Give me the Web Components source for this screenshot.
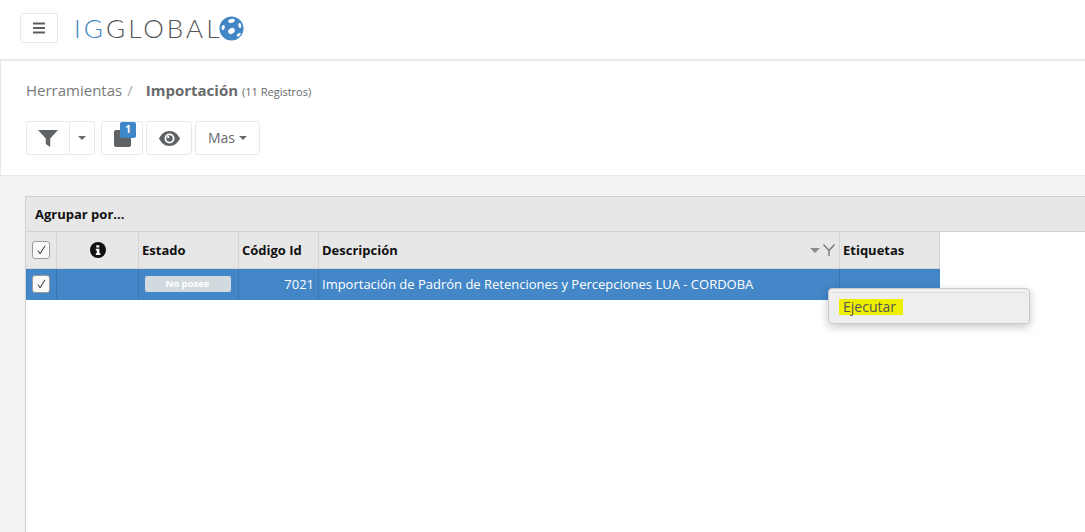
<!DOCTYPE html>
<html lang="es">
<head>
<meta charset="utf-8">
<title>Importación</title>
<style>
  html, body { margin: 0; height: 100%; overflow: hidden; background: #f3f3f4; }
  body { font-family: "Open Sans", sans-serif; color: #676a6c; }
</style>
</head>
<body>
<ig-topbar></ig-topbar>
<ig-heading></ig-heading>
<ig-panel></ig-panel>

<script>
class IGTopbar extends HTMLElement {
  constructor() {
    super();
    this.attachShadow({ mode: 'open' });
    this.shadowRoot.innerHTML = `
      <style>
        :host { display: flex; align-items: flex-start; height: 59px; background: #fff; border-bottom: 2px solid #e7eaec; }
        button { margin: 13px 0 0 20px; width: 38px; height: 30px; box-sizing: border-box; padding: 0; background: #fff;
                 border: 1px solid #e7eaec; border-radius: 3px; display: flex; align-items: center; justify-content: center; }
        .logo { display: flex; align-items: center; margin: 13px 0 0 16px; height: 30px; font: 300 26px/30px Lato, sans-serif;
                letter-spacing: 3.05px; color: #555; white-space: nowrap; }
        .logo span { color: #4386c6; }
        svg { display: block; }
        .ball { margin-left: -3px; }
      </style>
      <button aria-label="Menu">
        <svg width="12" height="12" viewBox="0 0 12 12"><path d="M0 1.500h12M0 6h12M0 10.500h12" stroke="#5b5e60" stroke-width="2"/></svg>
      </button>
      <div class="logo"><span>IG</span>GLOBAL
        <svg class="ball" width="25" height="25" viewBox="0 0 25 25">
          <circle cx="12.500" cy="12.500" r="12" fill="#4386c6"/>
          <ellipse cx="12.500" cy="4.800" rx="3.300" ry="1.900" fill="#fff" transform="rotate(-15 12.500 4.800)"/>
          <ellipse cx="4.200" cy="11.500" rx="1.500" ry="2.600" fill="#fff" transform="rotate(15 4.200 11.500)"/>
          <ellipse cx="12.500" cy="15" rx="3.500" ry="2.700" fill="#fff" transform="rotate(-35 12.500 15)"/>
          <ellipse cx="20.800" cy="9.500" rx="1.400" ry="2.600" fill="#fff" transform="rotate(-10 20.800 9.500)"/>
          <ellipse cx="19.800" cy="18.800" rx="2.300" ry="1.300" fill="#fff" transform="rotate(-40 19.800 18.800)"/>
        </svg>
      </div>`;
  }
}
customElements.define('ig-topbar', IGTopbar);

class IGToolButton extends HTMLElement {
  constructor() {
    super();
    this.attachShadow({ mode: 'open' });
    this.shadowRoot.innerHTML = `
      <style>
        :host { display: flex; align-items: center; justify-content: center; position: relative; box-sizing: border-box; height: 34px;
                background: #fff; border: 1px solid #e7eaec; border-radius: 3px; color: #676a6c; font-size: 14px; line-height: 30px; }
      </style>
      <slot></slot>`;
  }
}
customElements.define('ig-tool-button', IGToolButton);

class IGHeading extends HTMLElement {
  constructor() {
    super();
    this.attachShadow({ mode: 'open' });
    this.shadowRoot.innerHTML = `
      <style>
        :host { display: block; box-sizing: border-box; height: 115px; background: #fff; border-left: 1px solid #e7eaec; border-bottom: 1px solid #e7eaec; padding: 18px 0 0 25px; }
        .crumbs { display: flex; align-items: baseline; height: 22px; line-height: 22px; font-size: 15px; color: #777a7c; white-space: nowrap; }
        .sep { margin: 0 13px 0 5px; color: #a9abad; }
        b { font-weight: 700; color: #676a6c; }
        small { margin-left: 4px; font-size: 11px; color: #676a6c; }
        .tools { display: flex; margin-top: 20px; }
        .split { display: flex; }
        .arrow { display: block; width: 0; height: 0; border: 4px solid transparent; border-top-color: #676a6c; border-bottom: 0; }
        .badge { position: absolute; top: 0; left: 18px; width: 16px; height: 16px; background: #3f87c9; border-radius: 2px; color: #fff;
                 font-size: 10px; font-weight: 700; line-height: 15px; text-align: center; }
        svg { display: block; }
      </style>
      <div class="crumbs"><span>Herramientas</span><span class="sep">/</span><b>Importación</b><small>(11 Registros)</small></div>
      <div class="tools">
        <div class="split">
          <ig-tool-button style="width:43px;border-radius:3px 0 0 3px;border-right:0">
            <svg width="20" height="17" viewBox="0 0 19 17" preserveAspectRatio="none"><path d="M0 0h19L11.600 8.400V17L7.400 14V8.400z" fill="#5f6264"/></svg>
          </ig-tool-button>
          <ig-tool-button style="width:26px;border-radius:0 3px 3px 0"><span class="arrow"></span></ig-tool-button>
        </div>
        <ig-tool-button style="width:42px;margin-left:6px">
          <svg width="17" height="17" viewBox="0 0 17 17"><rect width="17" height="17" rx="2" fill="#5f6264"/></svg>
          <span class="badge">1</span>
        </ig-tool-button>
        <ig-tool-button style="width:46px;margin-left:3px">
          <svg width="21" height="15" viewBox="0 0 21 15"><path fill-rule="evenodd" fill="#5f6264" d="M10.500 0C15.500 0 19 3.500 21 7.500 19 11.500 15.500 15 10.500 15S2 11.500 0 7.500C2 3.500 5.500 0 10.500 0zM10.500 2.500a5 5 0 1 0 0 10 5 5 0 0 0 0-10z"/><circle cx="10.500" cy="7.500" r="3.200" fill="#5f6264"/><circle cx="9.200" cy="6.200" r="1.100" fill="#fff"/></svg>
        </ig-tool-button>
        <ig-tool-button style="width:65px;margin-left:3px;gap:4px">
          Mas<span class="arrow"></span>
        </ig-tool-button>
      </div>`;
  }
}
customElements.define('ig-heading', IGHeading);

class IGCheck extends HTMLElement {
  constructor() {
    super();
    this.attachShadow({ mode: 'open' });
    this.shadowRoot.innerHTML = `
      <style>
        :host { display: flex; align-items: center; justify-content: center; box-sizing: border-box; width: 18px; height: 18px;
                background: #fafafa; border: 1px solid #9c9c9c; border-radius: 3px; }
        svg { display: block; }
      </style>
      <svg width="9" height="10" viewBox="0 0 9 10"><path d="M1 5.500L3 8.800 8 .8" fill="none" stroke="#222" stroke-width="1"/></svg>`;
  }
}
customElements.define('ig-check', IGCheck);

class IGCell extends HTMLElement {
  constructor() {
    super();
    this.attachShadow({ mode: 'open' });
    this.shadowRoot.innerHTML = `
      <style>
        :host { display: flex; align-items: center; box-sizing: border-box; min-width: 0; padding: 0 3px; border-right: 1px solid var(--cell-line); white-space: nowrap; }
        :host([center]) { justify-content: center; }
        :host([end]) { justify-content: flex-end; padding-right: 4px; }
      </style>
      <slot></slot>`;
  }
}
customElements.define('ig-cell', IGCell);

class IGPanel extends HTMLElement {
  constructor() {
    super();
    this.attachShadow({ mode: 'open' });
    this.shadowRoot.innerHTML = `
      <style>
        :host { display: block; box-sizing: border-box; margin: 20px 0 0 25px; height: 336px; background: #fff;
                border: 1px solid #cfcfcf; border-right: 0; border-bottom: 0; position: relative; font-size: 13px; }
        .group { height: 34px; line-height: 35px; padding-left: 9px; background: #e7e7e7; border-bottom: 1px solid #d3d3d3; color: #111; font-weight: 700; }
        .row { display: grid; grid-template-columns: 31px 82px 100px 80px 521px 100px; width: 914px; }
        .head { height: 36px; background: #e7e7e7; border-bottom: 1px solid #d3d3d3; color: #111; font-weight: 700; --cell-line: #d3d3d3; }
        .body { height: 31px; background: #4387c8; color: #fff; --cell-line: #3c79b3; }
        .body ig-cell { padding-bottom: 2px; }
        .status { width: 86px; height: 16px; margin-left: -2px; background: #d1dade; border-radius: 2px; color: #fff; font-size: 9.500px; font-weight: 700; line-height: 16px; text-align: center; }
        .sort { display: flex; align-items: center; justify-content: space-between; width: 100%; }
        .marks { display: flex; align-items: center; gap: 3px; margin-right: 1px; }
        .down { width: 0; height: 0; border: 5px solid transparent; border-top-color: #8b8b8b; border-bottom: 0; }
        svg { display: block; }
      </style>
      <div class="group">Agrupar por...</div>
      <div class="row head">
        <ig-cell center><ig-check></ig-check></ig-cell>
        <ig-cell center>
          <svg width="16" height="16" viewBox="0 0 16 16"><circle cx="8" cy="8" r="8" fill="#111"/><path d="M6.300 3.200h3v2.300h-3zM5.800 6.800h3.600v4.400h1v1.700H5.800v-1.700h1v-2.700h-1z" fill="#fff"/></svg>
        </ig-cell>
        <ig-cell>Estado</ig-cell>
        <ig-cell>Código Id</ig-cell>
        <ig-cell>
          <div class="sort"><span>Descripción</span>
            <span class="marks"><span class="down"></span>
              <svg width="12" height="12" viewBox="0 0 12 12"><path d="M.5 .5L6 6.500V12M11.500 .5L6 6.500" fill="none" stroke="#6f7478" stroke-width="1.300"/></svg>
            </span>
          </div>
        </ig-cell>
        <ig-cell>Etiquetas</ig-cell>
      </div>
      <div class="row body">
        <ig-cell center><ig-check></ig-check></ig-cell>
        <ig-cell></ig-cell>
        <ig-cell center><span class="status">No posee</span></ig-cell>
        <ig-cell end>7021</ig-cell>
        <ig-cell>Importación de Padrón de Retenciones y Percepciones LUA - CORDOBA</ig-cell>
        <ig-cell style="border-right:0"></ig-cell>
      </div>
      <ig-context-menu></ig-context-menu>`;
  }
}
customElements.define('ig-panel', IGPanel);

class IGContextMenu extends HTMLElement {
  constructor() {
    super();
    this.attachShadow({ mode: 'open' });
    this.shadowRoot.innerHTML = `
      <style>
        :host { display: block; position: absolute; left: 802px; top: 91px; box-sizing: border-box; width: 202px; height: 36px; padding: 3px 4px 0;
                background: #eee; border: 1px solid #cacaca; border-radius: 4px; box-shadow: 0 3px 10px rgba(0,0,0,.22); color: #555; font-size: 14px; }
        .line { height: 1px; background: #dcdcdc; }
        mark { display: block; width: fit-content; margin: 6px 0 0 6px; padding: 0 7px 0 4px; line-height: 16px; background: #eeee00; color: #555; }
      </style>
      <div class="line"></div>
      <mark>Ejecutar</mark>`;
  }
}
customElements.define('ig-context-menu', IGContextMenu);
</script>
</body>
</html>
